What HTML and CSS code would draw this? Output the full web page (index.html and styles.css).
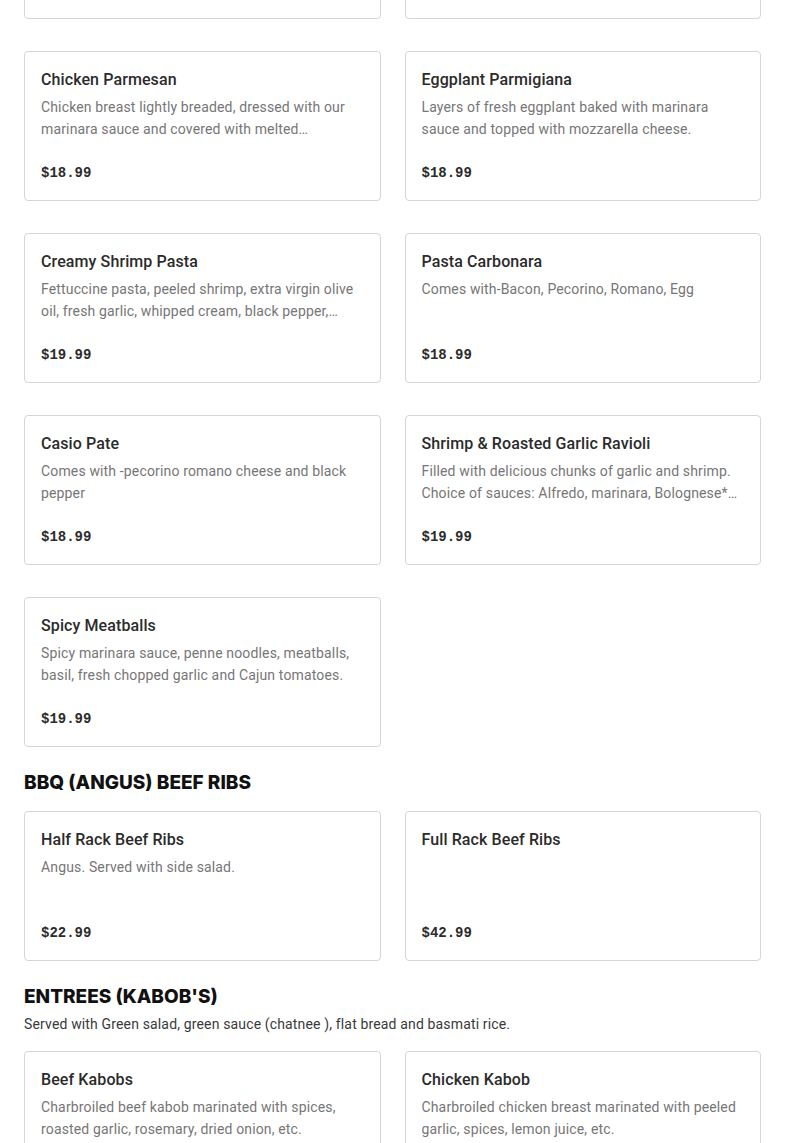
FILE: index.html
```html
<!DOCTYPE html>
<html lang="en">
<head>
<meta charset="utf-8">
<title>Menu</title>
<link rel="stylesheet" href="styles.css">
</head>
<body>
<main class="menu">
  <section class="section section-cut">
    <div class="grid">
      <article class="card"><h3 class="card-title">Lasagna</h3><p class="card-desc">Layers of pasta, meat sauce and ricotta cheese.</p><div class="card-price">$18.99</div></article>
      <article class="card"><h3 class="card-title">Fettuccine Alfredo</h3><p class="card-desc">Fettuccine pasta tossed in creamy alfredo sauce.</p><div class="card-price">$17.99</div></article>
      <article class="card"><h3 class="card-title">Chicken Parmesan</h3><p class="card-desc">Chicken breast lightly breaded, dressed with our marinara sauce and covered with melted mozzarella cheese, served with pasta.</p><div class="card-price">$18.99</div></article>
      <article class="card"><h3 class="card-title">Eggplant Parmigiana</h3><p class="card-desc">Layers of fresh eggplant baked with marinara sauce and topped with mozzarella cheese.</p><div class="card-price">$18.99</div></article>
      <article class="card"><h3 class="card-title">Creamy Shrimp Pasta</h3><p class="card-desc">Fettuccine pasta, peeled shrimp, extra virgin olive oil, fresh garlic, whipped cream, black pepper, parmesan cheese.</p><div class="card-price">$19.99</div></article>
      <article class="card"><h3 class="card-title">Pasta Carbonara</h3><p class="card-desc">Comes with-Bacon, Pecorino, Romano, Egg</p><div class="card-price">$18.99</div></article>
      <article class="card"><h3 class="card-title">Casio Pate</h3><p class="card-desc">Comes with -pecorino romano cheese and black pepper</p><div class="card-price">$18.99</div></article>
      <article class="card"><h3 class="card-title">Shrimp &amp; Roasted Garlic Ravioli</h3><p class="card-desc">Filled with delicious chunks of garlic and shrimp. Choice of sauces: Alfredo, marinara, Bolognese* or pink sauce.</p><div class="card-price">$19.99</div></article>
      <article class="card"><h3 class="card-title">Spicy Meatballs</h3><p class="card-desc">Spicy marinara sauce, penne noodles, meatballs, basil, fresh chopped garlic and Cajun tomatoes.</p><div class="card-price">$19.99</div></article>
    </div>
  </section>

  <section class="section">
    <h2 class="section-title">BBQ (ANGUS) BEEF RIBS</h2>
    <div class="grid">
      <article class="card"><h3 class="card-title">Half Rack Beef Ribs</h3><p class="card-desc">Angus. Served with side salad.</p><div class="card-price">$22.99</div></article>
      <article class="card"><h3 class="card-title">Full Rack Beef Ribs</h3><p class="card-desc"></p><div class="card-price">$42.99</div></article>
    </div>
  </section>

  <section class="section">
    <h2 class="section-title">ENTREES (KABOB'S)</h2>
    <p class="section-desc">Served with Green salad, green sauce (chatnee ), flat bread and basmati rice.</p>
    <div class="grid">
      <article class="card"><h3 class="card-title">Beef Kabobs</h3><p class="card-desc">Charbroiled beef kabob marinated with spices, roasted garlic, rosemary, dried onion, etc.</p><div class="card-price">$21.99</div></article>
      <article class="card"><h3 class="card-title">Chicken Kabob</h3><p class="card-desc">Charbroiled chicken breast marinated with peeled garlic, spices, lemon juice, etc.</p><div class="card-price">$19.99</div></article>
    </div>
  </section>
</main>
</body>
</html>
```

FILE: styles.css
```css
* { box-sizing: border-box; }

html, body {
  margin: 0;
  padding: 0;
  background: #ffffff;
}

body {
  font-family: Roboto, "Noto Sans", "Liberation Sans", sans-serif;
  color: #2b2b2b;
  overflow: hidden;
}

.menu {
  padding: 0 24px;
}

.section-cut {
  margin-top: -131px;
}

.section {
  margin-bottom: 24px;
}

.grid {
  display: grid;
  grid-template-columns: 1fr 1fr;
  column-gap: 24px;
  row-gap: 32px;
}

.section-title {
  margin: 0 0 16px;
  font-family: Inter, "Noto Sans", sans-serif;
  font-size: 19px;
  line-height: 24px;
  font-weight: 800;
  color: #111111;
}

.section-desc {
  margin: -12px 0 16px;
  font-size: 14px;
  line-height: 22px;
  color: #3a3a3a;
  letter-spacing: 0.15px;
}

.card {
  height: 150px;
  border: 1px solid #d6d6d6;
  border-radius: 4px;
  padding: 16px;
  display: flex;
  flex-direction: column;
  background: #fff;
}

.card-title {
  margin: 0 0 4px;
  font-size: 16px;
  line-height: 24px;
  font-weight: 500;
  color: #2b2b2b;
  letter-spacing: 0.1px;
}

.card-desc {
  margin: 0;
  height: 44px;
  font-size: 14px;
  line-height: 22px;
  color: #767676;
  letter-spacing: 0.15px;
  overflow: hidden;
  display: -webkit-box;
  -webkit-line-clamp: 2;
  -webkit-box-orient: vertical;
}

.card-price {
  margin-top: auto;
  padding-top: 2px;
  font-family: "Liberation Mono", "DejaVu Sans Mono", monospace;
  font-size: 14px;
  line-height: 22px;
  font-weight: 700;
  color: #2b2b2b;
}
```
